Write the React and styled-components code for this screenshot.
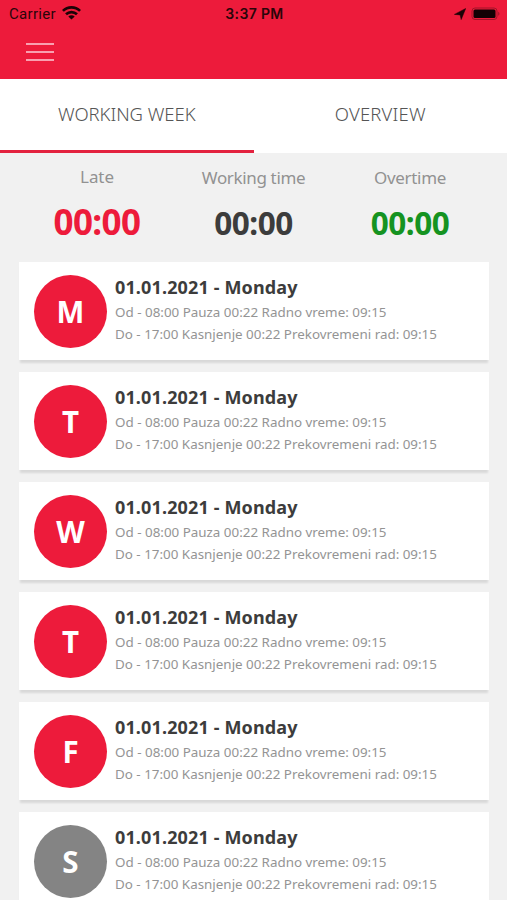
import React, { useState } from 'react';
import styled, { createGlobalStyle } from 'styled-components';

const GlobalStyle = createGlobalStyle`
  * {
    box-sizing: border-box;
  }
  body {
    margin: 0;
    background-color: #F1F1F1;
    font-family: 'Noto Sans', sans-serif;
  }
`

const Screen = styled.div`
  height: 900px;
  overflow: hidden;
  background-color: #F1F1F1;
`

const Header = styled.header`
  height: 79px;
  background-color: #ED1B3B;
`

const StatusBar = styled.div`
  display: grid;
  grid-template-columns: 1fr auto 1fr;
  align-items: center;
  height: 27px;
  padding: 0 7px 0 9px;
  font-family: Roboto, sans-serif;
  font-size: 15px;
  color: #2A0509;
`

const Network = styled.div`
  display: flex;
  align-items: center;
  gap: 6px;
  padding-top: 1px;
  letter-spacing: 0.3px;
  svg {
    margin-top: -2px;
  }
`

const Clock = styled.div`
  font-family: Inter, sans-serif;
  font-size: 14px;
  font-weight: 600;
  letter-spacing: 0.35px;
`

const Power = styled.div`
  display: flex;
  align-items: center;
  justify-content: flex-end;
  gap: 5px;
`

const Burger = styled.button`
  display: flex;
  flex-direction: column;
  gap: 6px;
  width: 28px;
  margin: 16px 0 0 26px;
  padding: 0;
  border: 0;
  background: none;
  cursor: pointer;
  span {
    height: 2px;
    background-color: #F9A0B0;
  }
`

const Tabs = styled.nav`
  display: flex;
  height: 74px;
  background-color: #FFFFFF;
`

const Tab = styled.button`
  flex: 1;
  padding: 0 0 3px;
  border: 0;
  border-bottom: 3px solid ${props => props.$active ? '#E3223F' : 'transparent'};
  background: none;
  font-family: 'Noto Sans', sans-serif;
  font-size: 18.5px;
  font-weight: 300;
  letter-spacing: ${props => props.$spacing};
  color: #555555;
  cursor: pointer;
`

const Summary = styled.div`
  display: grid;
  grid-template-columns: 156px 157px 156px;
  height: 109px;
  padding: 10px 19px 0;
`

const Total = styled.div`
  display: flex;
  flex-direction: column;
  align-items: center;
  padding-top: ${props => props.$large ? 1 : 2}px;
  span {
    height: 26px;
    line-height: 26px;
    font-size: 17px;
    letter-spacing: ${props => props.$spacing};
    color: #929292;
  }
  strong {
    line-height: 44px;
    margin-top: 10px;
    font-size: ${props => props.$large ? 35 : 31.5}px;
    letter-spacing: ${props => props.$large ? -0.6 : -0.5}px;
    color: ${props => props.$color};
  }
`

const Days = styled.div`
  display: flex;
  flex-direction: column;
  gap: 12px;
  padding: 0 18px 0 19px;
`

const Day = styled.div`
  display: flex;
  flex-shrink: 0;
  height: 98px;
  padding: 13px 15px 0;
  background-color: #FFFFFF;
  box-shadow: 0 4px 2px -1px rgba(0, 0, 0, 0.1);
`

const Initial = styled.div`
  display: flex;
  align-items: center;
  justify-content: center;
  flex-shrink: 0;
  width: 73px;
  height: 73px;
  padding-bottom: 1px;
  border-radius: 50%;
  background-color: ${props => props.$off ? '#848484' : '#ED1B3B'};
  font-size: 29.5px;
  font-weight: 700;
  color: #FFFFFF;
`

const Details = styled.div`
  margin-left: 8px;
  white-space: nowrap;
  h2 {
    margin: 0 0 1px;
    font-size: 18px;
    font-weight: 700;
    letter-spacing: 0.14px;
    line-height: 25px;
    color: #3C3C3C;
  }
  p {
    margin: 0;
    font-size: 13.4px;
    line-height: 22.4px;
    color: #949494;
  }
`

const totals = [
  { label: 'Late', value: '00:00', color: '#ED1B3B', large: true, spacing: '-0.1px' },
  { label: 'Working time', value: '00:00', color: '#3C3C3C', spacing: '-0.35px' },
  { label: 'Overtime', value: '00:00', color: '#159321', spacing: '-0.3px' },
]

const days = ['M', 'T', 'W', 'T', 'F', 'S'].map(initial => ({
  initial,
  off: initial === 'S',
  title: '01.01.2021 - Monday',
  start: 'Od - 08:00 Pauza 00:22 Radno vreme: 09:15',
  end: 'Do - 17:00 Kasnjenje 00:22 Prekovremeni rad: 09:15',
}))

const Wifi = () => (
  <svg width="19" height="14" viewBox="0 0 19 14" fill="none" stroke="#1C0306" strokeWidth="2.7">
    <path d="M0.9 4.9C5.7 0.2 13.3 0.2 18.1 4.9" />
    <path d="M4 8.2C7.1 5.3 11.9 5.3 15 8.2" />
    <path d="M9.5 13.5L6.3 10.4C8.1 8.9 10.9 8.9 12.7 10.4Z" fill="#1C0306" stroke="none" />
  </svg>
)

const Location = () => (
  <svg width="12" height="12" viewBox="0 0 12 12" fill="#1C0306">
    <path d="M11.7 0.5L7.2 11.6L6.1 6.9L0.4 6.4Z" stroke="#1C0306" strokeWidth="0.5" />
  </svg>
)

const Battery = () => (
  <svg width="29" height="14" viewBox="0 0 29 14">
    <rect x="1" y="1" width="25" height="11.5" rx="3" fill="none" stroke="#A11529" />
    <rect x="2.5" y="2.5" width="22" height="8.5" rx="1.5" fill="#120104" />
    <path d="M27.2 4.8C28.9 5.3 28.9 8.2 27.2 8.7Z" fill="#A11529" />
  </svg>
)

const App = () => {
  const [activeTab, setActiveTab] = useState('week');
  return (
    <Screen>
      <GlobalStyle />
      <Header>
        <StatusBar>
          <Network>Carrier <Wifi /></Network>
          <Clock>3:37 PM</Clock>
          <Power><Location /><Battery /></Power>
        </StatusBar>
        <Burger aria-label="Menu"><span /><span /><span /></Burger>
      </Header>
      <Tabs>
        <Tab $active={activeTab === 'week'} $spacing="-0.05px" onClick={() => setActiveTab('week')}>WORKING WEEK</Tab>
        <Tab $active={activeTab === 'overview'} $spacing="0.2px" onClick={() => setActiveTab('overview')}>OVERVIEW</Tab>
      </Tabs>
      <Summary>
        {totals.map(total => (
          <Total key={total.label} $color={total.color} $large={total.large} $spacing={total.spacing}>
            <span>{total.label}</span>
            <strong>{total.value}</strong>
          </Total>
        ))}
      </Summary>
      <Days>
        {days.map((day, index) => (
          <Day key={`days_${index}`}>
            <Initial $off={day.off}>{day.initial}</Initial>
            <Details>
              <h2>{day.title}</h2>
              <p>{day.start}</p>
              <p>{day.end}</p>
            </Details>
          </Day>
        ))}
      </Days>
    </Screen>
  )
}

export default App;
